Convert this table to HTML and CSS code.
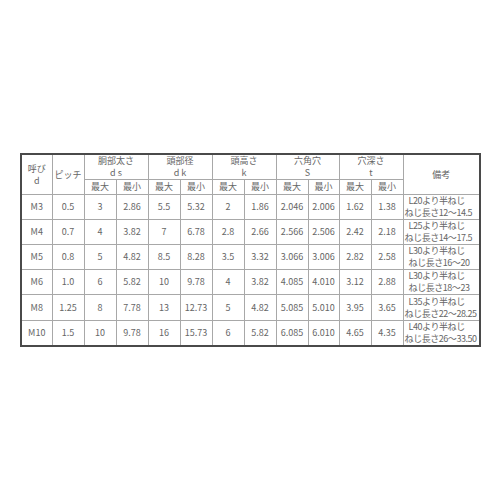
FILE: index.html
```html
<!DOCTYPE html>
<html lang="ja">
<head>
<meta charset="utf-8">
<link rel="stylesheet" href="styles.css">
</head>
<body>
<div class="page">
<table class="spec">
<colgroup>
<col class="c31"><col class="c32"><col class="c32"><col class="c32"><col class="c32"><col class="c32"><col class="c32"><col class="c32"><col class="c32"><col class="c31"><col class="c32"><col class="c32"><col class="c77">
</colgroup>
<thead>
<tr class="h1">
<th rowspan="2">呼び<br>d</th>
<th rowspan="2">ピッチ</th>
<th colspan="2">胴部太さ<br>d s</th>
<th colspan="2">頭部径<br>d k</th>
<th colspan="2">頭高さ<br>k</th>
<th colspan="2">六角穴<br>S</th>
<th colspan="2">穴深さ<br>t</th>
<th rowspan="2">備考</th>
</tr>
<tr class="h2">
<th>最大</th><th>最小</th><th>最大</th><th>最小</th><th>最大</th><th>最小</th><th>最大</th><th>最小</th><th>最大</th><th>最小</th>
</tr>
</thead>
<tbody>
<tr><td>M3</td><td>0.5</td><td>3</td><td>2.86</td><td>5.5</td><td>5.32</td><td>2</td><td>1.86</td><td>2.046</td><td>2.006</td><td>1.62</td><td>1.38</td><td class="note"><span class="l1">L20より半ねじ</span><br>ねじ長さ12～14.5</td></tr>
<tr><td>M4</td><td>0.7</td><td>4</td><td>3.82</td><td>7</td><td>6.78</td><td>2.8</td><td>2.66</td><td>2.566</td><td>2.506</td><td>2.42</td><td>2.18</td><td class="note"><span class="l1">L25より半ねじ</span><br>ねじ長さ14～17.5</td></tr>
<tr><td>M5</td><td>0.8</td><td>5</td><td>4.82</td><td>8.5</td><td>8.28</td><td>3.5</td><td>3.32</td><td>3.066</td><td>3.006</td><td>2.82</td><td>2.58</td><td class="note"><span class="l1">L30より半ねじ</span><br><span class="l2">ねじ長さ16～20</span></td></tr>
<tr><td>M6</td><td>1.0</td><td>6</td><td>5.82</td><td>10</td><td>9.78</td><td>4</td><td>3.82</td><td>4.085</td><td>4.010</td><td>3.12</td><td>2.88</td><td class="note"><span class="l1">L30より半ねじ</span><br><span class="l2">ねじ長さ18～23</span></td></tr>
<tr class="r8"><td>M8</td><td>1.25</td><td>8</td><td>7.78</td><td>13</td><td>12.73</td><td>5</td><td>4.82</td><td>5.085</td><td>5.010</td><td>3.95</td><td>3.65</td><td class="note"><span class="l1">L35より半ねじ</span><br>ねじ長さ22～28.25</td></tr>
<tr><td>M10</td><td>1.5</td><td>10</td><td>9.78</td><td>16</td><td>15.73</td><td>6</td><td>5.82</td><td>6.085</td><td>6.010</td><td>4.65</td><td>4.35</td><td class="note"><span class="l1">L40より半ねじ</span><br>ねじ長さ26～33.50</td></tr>
</tbody>
</table>
</div>
</body>
</html>
```
FILE: styles.css
```css
html, body {
  margin: 0;
  padding: 0;
  background: #ffffff;
}
.page {
  width: 500px;
  height: 500px;
  box-sizing: border-box;
  padding: 153px 0 0 20px;
}
.spec {
  border-collapse: collapse;
  table-layout: fixed;
  width: 461px;
  border: 2px solid #4a4a4a;
  font-family: "Noto Sans CJK JP", "Noto Sans", sans-serif;
  font-size: 9px;
  line-height: 12px;
  color: #666666;
}
.c31 { width: 31px; }
.c32 { width: 32px; }
.c77 { width: 77px; }
.spec th, .spec td {
  border: 1px solid #a8a8a8;
  padding: 0;
  text-align: center;
  vertical-align: middle;
  font-weight: normal;
  white-space: nowrap;
  overflow: hidden;
}
.h1 { height: 24px; }
.h2 { height: 15px; }
.spec tbody tr { height: 25px; }
.spec tbody tr.r8 { height: 26px; }
.spec td.note {
  text-align: left;
  padding-left: 1px;
  letter-spacing: -0.45px;
}
.l1 { padding-left: 4px; }
.l2 { padding-left: 4px; }
```
